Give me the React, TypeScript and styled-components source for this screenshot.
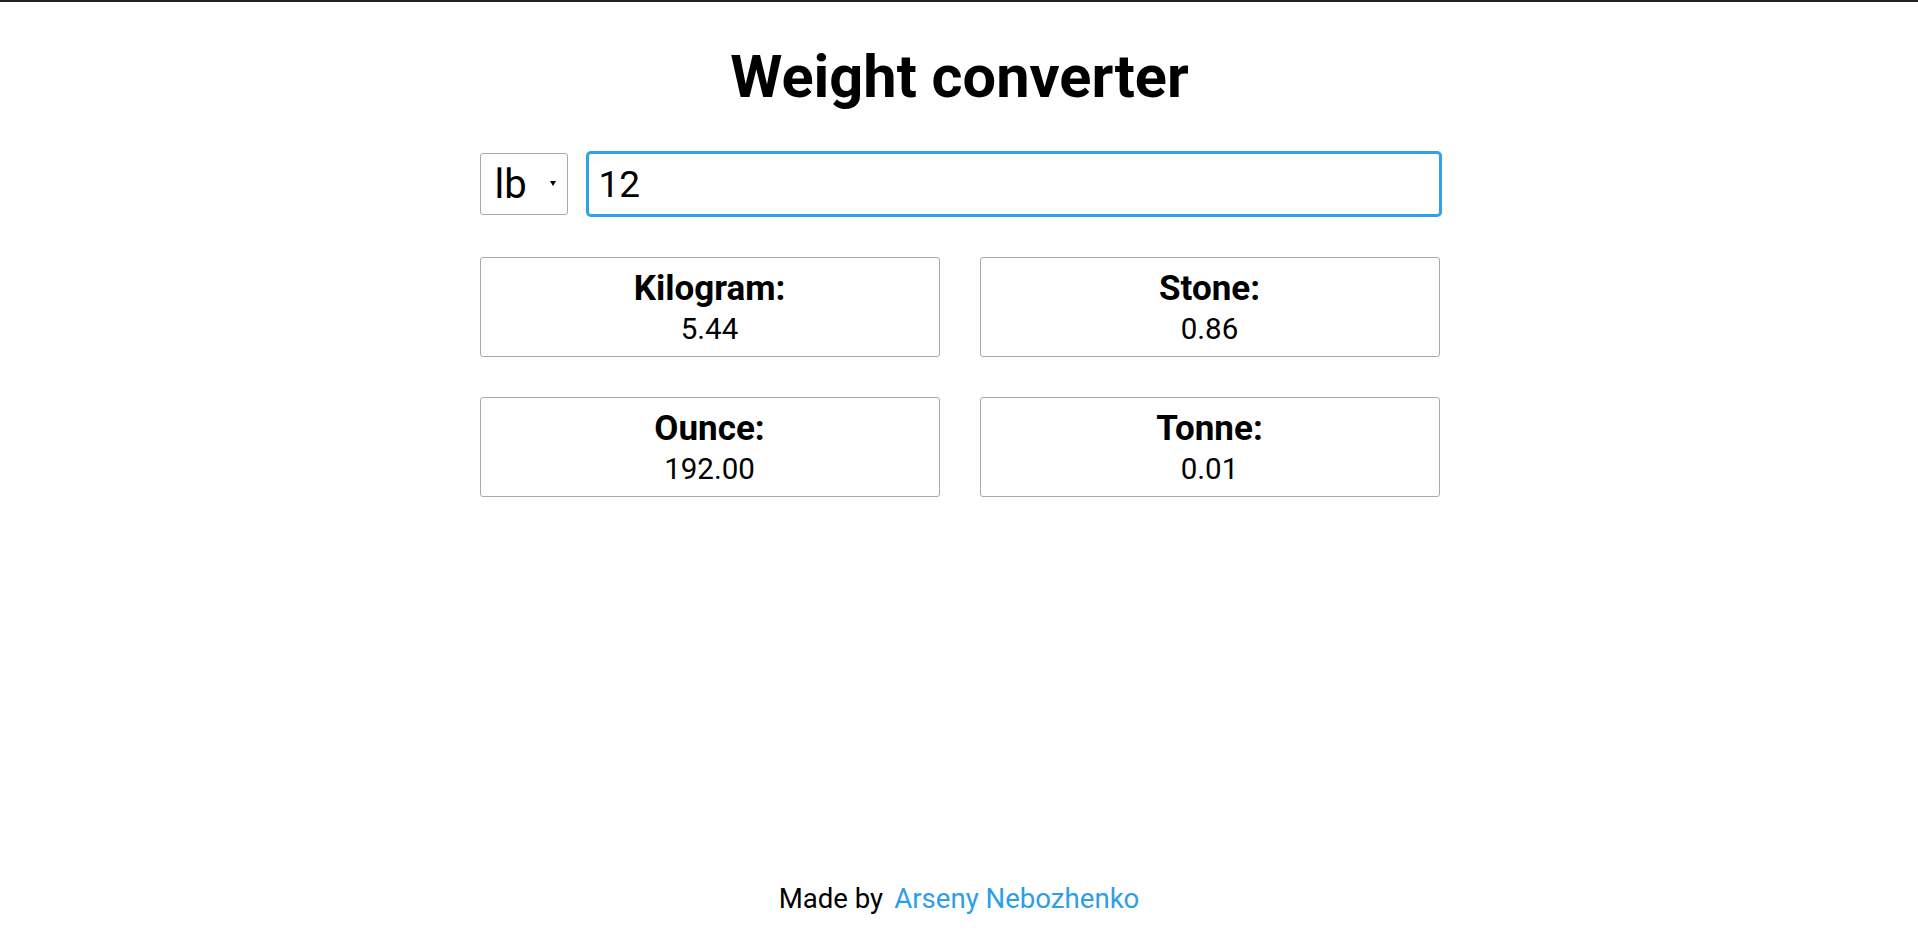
import React, { useState } from "react";
import styled, { createGlobalStyle } from "styled-components";

const GlobalStyle = createGlobalStyle`
  html, body {
    margin: 0;
    padding: 0;
    background: #ffffff;
  }
  body {
    font-family: "Roboto", "Liberation Sans", sans-serif;
    color: #000000;
  }
  * { box-sizing: border-box; }
`;

const Page = styled.div`
  min-height: 100vh;
  border-top: 2px solid #222222;
  display: flex;
  flex-direction: column;
`;

const Main = styled.main`
  width: 961px;
  padding-left: 1px;
  margin: 0 auto;
  display: flex;
  flex-direction: column;
`;

const Title = styled.h1`
  margin: 40px 0 0;
  font-size: 59.5px;
  line-height: 70px;
  font-weight: 700;
  text-align: center;
`;

const Controls = styled.div`
  margin-top: 41px;
  display: flex;
  align-items: center;
  gap: 20px;
`;

const SelectWrap = styled.div`
  position: relative;
  flex: 0 0 88px;
  height: 62px;

  &::after {
    content: "";
    position: absolute;
    right: 12px;
    top: 28px;
    border-left: 3.5px solid transparent;
    border-right: 3.5px solid transparent;
    border-top: 5px solid #000000;
    pointer-events: none;
  }
`;

const UnitSelect = styled.select`
  appearance: none;
  -webkit-appearance: none;
  width: 100%;
  height: 100%;
  border: 1px solid #a9a9a9;
  border-radius: 3px;
  background: #ffffff;
  padding: 0 0 0 14px;
  font-family: "Roboto", "Liberation Sans", sans-serif;
  font-size: 40px;
  color: #000000;
  outline: none;
`;

const ValueInput = styled.input`
  flex: 1;
  height: 62px;
  border: 1px solid #30a0e8;
  box-shadow: 0 0 0 2px #30a0e8;
  outline: none;
  border-radius: 3px;
  padding: 0 0 0 10px;
  font-family: "Roboto", "Liberation Sans", sans-serif;
  font-size: 37px;
  color: #000000;
  caret-color: #000000;
  &:focus {
    outline: none;
  }
`;

const Results = styled.div`
  margin-top: 42px;
  display: grid;
  grid-template-columns: 1fr 1fr;
  column-gap: 40px;
  row-gap: 40px;
`;

const Card = styled.div`
  height: 100px;
  border: 1px solid #a9a9a9;
  border-radius: 3px;
  padding: 10px 0 0;
  display: flex;
  flex-direction: column;
  align-items: center;
`;

const Label = styled.div`
  font-size: 35px;
  line-height: 41px;
  font-weight: 700;
`;

const Value = styled.div`
  margin-top: 3px;
  font-size: 29.5px;
  line-height: 34px;
  font-weight: 400;
`;

const Footer = styled.footer`
  margin-top: auto;
  padding-bottom: 37px;
  display: flex;
  justify-content: center;
  align-items: baseline;
  gap: 11px;
  font-size: 27.6px;
  line-height: 32px;
`;

const AuthorLink = styled.a`
  color: #2d9ee8;
  text-decoration: none;
`;

const units: Record<string, number> = {
  lb: 0.45359237,
  kg: 1,
  st: 6.35029318,
  oz: 0.028349523125,
  t: 1000,
};

const outputs = [
  { name: "Kilogram", factor: 1 },
  { name: "Stone", factor: 6.35029318 },
  { name: "Ounce", factor: 0.028349523125 },
  { name: "Tonne", factor: 1000 },
];

export default function App() {
  const [unit, setUnit] = useState("lb");
  const [value, setValue] = useState("12");
  const num = parseFloat(value) || 0;
  const kg = num * units[unit];

  return (
    <>
      <GlobalStyle />
      <Page>
        <Main>
          <Title>Weight converter</Title>
          <Controls>
            <SelectWrap>
              <UnitSelect value={unit} onChange={(e) => setUnit(e.target.value)}>
                <option value="lb">lb</option>
                <option value="kg">kg</option>
                <option value="st">st</option>
                <option value="oz">oz</option>
                <option value="t">t</option>
              </UnitSelect>
            </SelectWrap>
            <ValueInput
              autoFocus
              value={value}
              onChange={(e) => setValue(e.target.value)}
            />
          </Controls>
          <Results>
            {outputs.map((o) => (
              <Card key={o.name}>
                <Label>{o.name}:</Label>
                <Value>{(kg / o.factor).toFixed(2)}</Value>
              </Card>
            ))}
          </Results>
        </Main>
        <Footer>
          <span>Made by</span>
          <AuthorLink href="#">Arseny Nebozhenko</AuthorLink>
        </Footer>
      </Page>
    </>
  );
}
